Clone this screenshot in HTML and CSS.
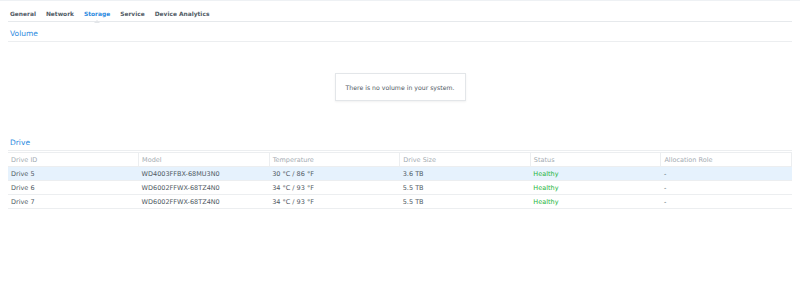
FILE: index.html
```html
<!DOCTYPE html>
<html lang="en">
<head>
    <meta charset="UTF-8">
    <link rel="stylesheet" href="styles.css">
</head>
<body>
<div class="page">
    <!-- Tabs -->
    <div class="tabs">
        <span class="tab">General</span>
        <span class="tab">Network</span>
        <span class="tab active">Storage</span>
        <span class="tab">Service</span>
        <span class="tab">Device Analytics</span>
    </div>

    <!-- Volume -->
    <div class="section-title">Volume</div>
    <div class="empty-area">
        <div class="empty-box">There is no volume in your system.</div>
    </div>

    <!-- Drive -->
    <div class="section-title">Drive</div>
    <table class="drives">
        <thead>
            <tr>
                <th>Drive ID</th>
                <th>Model</th>
                <th>Temperature</th>
                <th>Drive Size</th>
                <th>Status</th>
                <th>Allocation Role</th>
            </tr>
        </thead>
        <tbody>
            <tr class="selected">
                <td>Drive 5</td>
                <td>WD4003FFBX-68MU3N0</td>
                <td>30 °C / 86 °F</td>
                <td>3.6 TB</td>
                <td class="ok">Healthy</td>
                <td>-</td>
            </tr>
            <tr>
                <td>Drive 6</td>
                <td>WD6002FFWX-68TZ4N0</td>
                <td>34 °C / 93 °F</td>
                <td>5.5 TB</td>
                <td class="ok">Healthy</td>
                <td>-</td>
            </tr>
            <tr>
                <td>Drive 7</td>
                <td>WD6002FFWX-68TZ4N0</td>
                <td>34 °C / 93 °F</td>
                <td>5.5 TB</td>
                <td class="ok">Healthy</td>
                <td>-</td>
            </tr>
        </tbody>
    </table>
</div>
</body>
</html>
```

FILE: styles.css
```css
body {
    margin: 0;
    background: #fff;
    font-family: "DejaVu Sans", sans-serif;
    font-size: 6.5px;
    color: #505a64;
    border-top: 1px solid #eef1f4;
}

.page {
    padding: 0 8px;
}

/* Tabs */
.tabs {
    display: flex;
    gap: 10px;
    height: 21px;
    box-sizing: border-box;
    align-items: center;
    padding: 5px 2px 0;
    border-bottom: 1px solid #e6e9ec;
    font-weight: bold;
    font-size: 5.9px;
}

.tab {
    position: relative;
    color: #505a64;
}

.tab.active {
    color: #2b8ae0;
}

.tab.active::after {
    content: "";
    position: absolute;
    left: 50%;
    bottom: -6px;
    margin-left: -3px;
    border: 3px solid transparent;
    border-bottom-color: #e3e6e9;
    border-top: 0;
}

/* Sections */
.section-title {
    color: #2b8ae0;
    font-size: 7.5px;
    padding: 7px 2px 3px;
    border-bottom: 1px solid #eceef0;
}

.empty-area {
    height: 89px;
    display: flex;
    justify-content: center;
    padding-top: 31px;
    box-sizing: border-box;
}

.empty-box {
    height: 26px;
    padding: 0 10px;
    display: flex;
    align-items: center;
    border: 1px solid #e3e6e9;
    box-shadow: 0 1px 2px rgba(0, 0, 0, 0.06);
    font-size: 6.2px;
    color: #505a64;
}

/* Drive table */
.drives {
    width: 100%;
    margin-top: 1px;
    border-collapse: collapse;
    table-layout: fixed;
}

.drives th {
    text-align: left;
    font-weight: normal;
    color: #a4abb2;
    height: 13px;
    padding: 0 3px;
    border-top: 1px solid #eceef0;
    border-right: 1px solid #eceef0;
}

.drives td {
    height: 13px;
    padding: 0 3px;
    border-top: 1px solid #eceef0;
    border-bottom: 1px solid #eceef0;
}

.drives tr.selected td {
    background: #e6f2fd;
}

.drives td.ok {
    color: #25b53a;
}
```
